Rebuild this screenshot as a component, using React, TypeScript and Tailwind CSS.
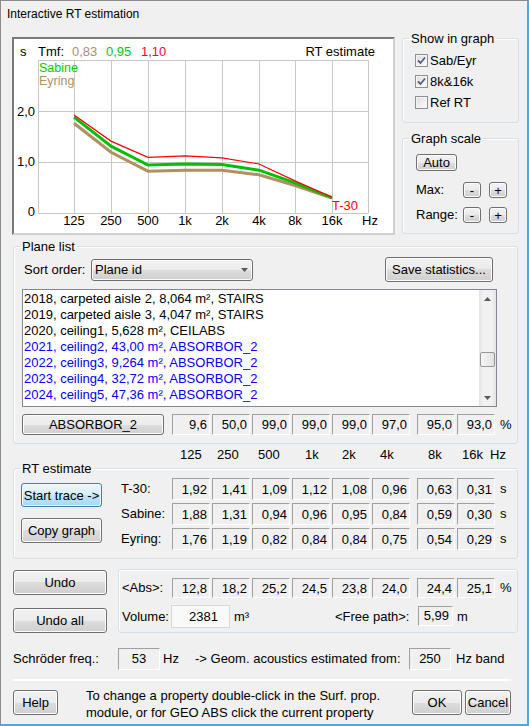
import React from 'react';

const sunken = 'border border-t-[#a0a0a0] border-l-[#a0a0a0] border-r-white border-b-white';
const face =
  'border border-[#707070] rounded-[3px] bg-[linear-gradient(#f2f2f2,#ebebeb_50%,#dddddd_50%,#cfcfcf)] shadow-[inset_0_0_0_1px_#fcfcfc]';
const faceHot =
  'border border-[#3c7fb1] rounded-[3px] bg-[linear-gradient(#eaf6fd,#d9f0fc_50%,#bee6fd_50%,#a7d9f5)] shadow-[inset_0_0_0_1px_#f4fbff]';

type BtnProps = { children: React.ReactNode; className?: string; hot?: boolean };

const Btn = ({ children, className = '', hot = false }: BtnProps) => (
  <button
    type="button"
    className={`${hot ? faceHot : face} flex items-center justify-center leading-none text-black shrink-0 ${className}`}
  >
    {children}
  </button>
);

const Val = ({ v, h }: { v: string; h: string }) => (
  <div className={`w-[38px] ${h} ${sunken} flex items-center justify-end pr-[2px] leading-none`}>{v}</div>
);

const ValRow = ({ vals, h, unit }: { vals: string[]; h: string; unit: string }) => (
  <div className="flex items-center">
    <div className="flex gap-[2px]">
      {vals.slice(0, 6).map((v, i) => (
        <Val key={i} v={v} h={h} />
      ))}
    </div>
    <div className="flex gap-[2px] ml-[7px]">
      {vals.slice(6).map((v, i) => (
        <Val key={i} v={v} h={h} />
      ))}
    </div>
    <span className="ml-[5px]">{unit}</span>
  </div>
);

const Group = ({ title, className = '', children }: { title?: string; className?: string; children: React.ReactNode }) => (
  <fieldset className={`border border-[#d5dfe5] rounded-[3px] shadow-[inset_1px_1px_0_#fff] min-w-0 ${className}`}>
    {title ? <legend className="ml-[6px] px-[2px] leading-[15px]">{title}</legend> : null}
    {children}
  </fieldset>
);

const Check = ({ checked, label }: { checked: boolean; label: string }) => (
  <div className="flex items-center h-[21px]">
    <div className="w-[13px] h-[13px] border border-[#8f8f8f] bg-[linear-gradient(135deg,#dcdcdc,#fdfdfd)] shadow-[inset_0_0_0_1px_#f4f4f4] flex items-center justify-center">
      {checked && (
        <svg width="11" height="11" viewBox="0 0 11 11">
          <polyline points="2,5.5 4.5,8 9,2.5" fill="none" stroke="#4d6185" strokeWidth="1.8" />
        </svg>
      )}
    </div>
    <span className="ml-[2px]">{label}</span>
  </div>
);

const xs = [74, 111, 148, 185, 222, 259, 295, 332];
const yv = (v: number) => 213 - 51 * v;
const pts = (arr: number[]) => arr.map((v, i) => `${xs[i]},${yv(v).toFixed(1)}`).join(' ');

const t30 = ['1,92', '1,41', '1,09', '1,12', '1,08', '0,96', '0,63', '0,31'];
const sab = ['1,88', '1,31', '0,94', '0,96', '0,95', '0,84', '0,59', '0,30'];
const eyr = ['1,76', '1,19', '0,82', '0,84', '0,84', '0,75', '0,54', '0,29'];
const num = (a: string[]) => a.map((s) => parseFloat(s.replace(',', '.')));

const freqs = ['125', '250', '500', '1k', '2k', '4k', '8k', '16k'];

const Graph = () => (
  <div className="ml-[12px] mt-[10px] w-[383px] h-[198px] bg-white border-2 border-t-[#7a7a7a] border-l-[#7a7a7a] border-r-[#d0d0d0] border-b-[#d0d0d0] shrink-0">
    <svg width="379" height="194" viewBox="14 39 379 194" fontFamily="Liberation Sans, Arial, sans-serif" fontSize="13">
      {[38, ...xs, 368].map((x) => (
        <line key={x} x1={x + 0.5} x2={x + 0.5} y1={60} y2={213} stroke="#c8c8c8" />
      ))}
      {[60, 111, 162, 213].map((y) => (
        <line key={y} x1={38} x2={368.5} y1={y + 0.5} y2={y + 0.5} stroke="#c8c8c8" />
      ))}
      <text x="20" y="56">s</text>
      <text x="38" y="56">Tmf:</text>
      <text x="72" y="56" fill="#b08f62">0,83</text>
      <text x="106" y="56" fill="#00cc00">0,95</text>
      <text x="141" y="56" fill="#ff0033">1,10</text>
      <text x="375" y="56" textAnchor="end">RT estimate</text>
      <text x="39" y="72" fontSize="12.5" fill="#00cc00">Sabine</text>
      <text x="39" y="85" fontSize="12.5" fill="#b08f62">Eyring</text>
      <text x="35" y="116" textAnchor="end">2,0</text>
      <text x="35" y="166" textAnchor="end">1,0</text>
      <text x="35" y="216" textAnchor="end">0</text>
      {freqs.map((f, i) => (
        <text key={f} x={xs[i]} y="225" textAnchor="middle">
          {f}
        </text>
      ))}
      <text x="370" y="225" textAnchor="middle">Hz</text>
      <polyline points={pts(num(eyr))} fill="none" stroke="#b08f62" strokeWidth="3" />
      <polyline points={pts(num(sab))} fill="none" stroke="#00c000" strokeWidth="3" />
      <polyline points={pts(num(t30))} fill="none" stroke="#ff0000" strokeWidth="1.2" />
      <text x="332" y="210" fill="#ff0000">T-30</text>
    </svg>
  </div>
);

const items: [string, boolean][] = [
  ['2018, carpeted aisle 2, 8,064 m², STAIRS', false],
  ['2019, carpeted aisle 3, 4,047 m², STAIRS', false],
  ['2020, ceiling1, 5,628 m², CEILABS', false],
  ['2021, ceiling2, 43,00 m², ABSORBOR_2', true],
  ['2022, ceiling3, 9,264 m², ABSORBOR_2', true],
  ['2023, ceiling4, 32,72 m², ABSORBOR_2', true],
  ['2024, ceiling5, 47,36 m², ABSORBOR_2', true],
];

const Arrow = ({ up }: { up?: boolean }) => (
  <svg width="7" height="4" viewBox="0 0 7 4">
    <polygon points={up ? '0,4 7,4 3.5,0' : '0,0 7,0 3.5,4'} fill="#5a5a5a" />
  </svg>
);

export default function App() {
  const hdrW = ['w-[37px]', 'w-[41px]', 'w-[47px]', 'w-[37px]', 'w-[38px]', 'w-[48px]', 'w-[34px]', 'w-[28px]'];
  return (
    <div className="w-[529px] h-[726px] bg-[#f0f0f0] flex flex-col text-[13px] text-black font-['Liberation_Sans',Arial,sans-serif] overflow-hidden shadow-[inset_1px_1px_0_#8c8c8c,inset_-2px_-2px_0_#45ace4]">
      {/* title */}
      <div className="h-[27px] shrink-0 flex items-center pl-[7px] text-[12px]">Interactive RT estimation</div>

      {/* graph + options */}
      <div className="flex h-[210px] shrink-0">
        <Graph />
        <div className="ml-[7px] mt-[4px] w-[117px] flex flex-col">
          <Group title="Show in graph">
            <div className="pt-[4px] pb-[9px] pl-[12px]">
              <Check checked label="Sab/Eyr" />
              <Check checked label="8k&16k" />
              <Check checked={false} label="Ref RT" />
            </div>
          </Group>
          <Group title="Graph scale" className="mt-[8px]">
            <div className="pt-[8px] pb-[10px] pl-[13px]">
              <Btn className="w-[41px] h-[17px]">Auto</Btn>
              <div className="flex items-center h-[16px] mt-[11px]">
                <span className="w-[47px]">Max:</span>
                <Btn className="w-[18px] h-[16px]">-</Btn>
                <Btn className="w-[18px] h-[16px] ml-[8px]">+</Btn>
              </div>
              <div className="flex items-center h-[16px] mt-[9px]">
                <span className="w-[47px]">Range:</span>
                <Btn className="w-[18px] h-[16px]">-</Btn>
                <Btn className="w-[18px] h-[16px] ml-[8px]">+</Btn>
              </div>
            </div>
          </Group>
        </div>
      </div>

      {/* plane list */}
      <Group title="Plane list" className="mt-[2px] ml-[13px] w-[505px] shrink-0">
        <div className="pt-[3px] pb-[8px] pl-[8px]">
          <div className="flex items-center h-[25px]">
            <span className="ml-[2px] w-[67px]">Sort order:</span>
            <div className={`${face} w-[162px] h-[22px] flex items-center pl-[3px] pr-[4px]`}>
              <span className="flex-1">Plane id</span>
              <Arrow />
            </div>
            <Btn className="ml-[132px] w-[108px] h-[25px]">Save statistics...</Btn>
          </div>
          <div className="mt-[7px] w-[475px] h-[118px] border border-[#828790] bg-white flex">
            <div className="flex-1 pt-[1px] pl-[1px]">
              {items.map(([t, blue]) => (
                <div key={t} className={`h-[16px] leading-[16px] whitespace-nowrap ${blue ? 'text-[#0000ff]' : 'text-black'}`}>
                  {t}
                </div>
              ))}
            </div>
            <div className="w-[17px] flex flex-col bg-[linear-gradient(90deg,#e4e4e4,#f1f1f1_25%,#f1f1f1_75%,#e4e4e4)]">
              <div className="h-[17px] flex items-center justify-center">
                <Arrow up />
              </div>
              <div className="flex-1 pt-[45px]">
                <div className="mx-auto w-[15px] h-[15px] rounded-[2px] border border-[#979797] bg-[linear-gradient(90deg,#f6f6f6,#e2e2e2)]" />
              </div>
              <div className="h-[17px] flex items-center justify-center">
                <Arrow />
              </div>
            </div>
          </div>
          <div className="mt-[7px] flex items-center h-[21px]">
            <Btn className="w-[142px] h-[21px]">ABSORBOR_2</Btn>
            <div className="ml-[8px]">
              <ValRow vals={['9,6', '50,0', '99,0', '99,0', '99,0', '97,0', '95,0', '93,0']} h="h-[21px]" unit="%" />
            </div>
          </div>
        </div>
      </Group>

      {/* frequency header */}
      <div className="ml-[180px] h-[17px] leading-[21px] flex shrink-0">
        {freqs.map((f, i) => (
          <span key={f} className={hdrW[i]}>
            {f}
          </span>
        ))}
        <span>Hz</span>
      </div>

      {/* RT estimate */}
      <Group title="RT estimate" className="ml-[13px] w-[505px] shrink-0">
        <div className="flex pt-[2px] pb-[8px]">
          <div className="ml-[7px] w-[81px] pt-[5px] flex flex-col">
            <Btn hot className="w-[81px] h-[24px]">Start trace -&gt;</Btn>
            <Btn className="w-[81px] h-[25px] mt-[11px]">Copy graph</Btn>
          </div>
          <div className="ml-[19px] flex flex-col gap-[3px]">
            {[
              ['T-30:', t30],
              ['Sabine:', sab],
              ['Eyring:', eyr],
            ].map(([l, v]) => (
              <div key={l as string} className="flex items-center h-[22px]">
                <span className="w-[51px]">{l as string}</span>
                <ValRow vals={v as string[]} h="h-[22px]" unit="s" />
              </div>
            ))}
          </div>
        </div>
      </Group>

      {/* undo + averages */}
      <div className="flex mt-[10px] h-[64px] ml-[13px] shrink-0">
        <div className="w-[94px] flex flex-col">
          <Btn className="w-[94px] h-[25px] mt-[1px]">Undo</Btn>
          <Btn className="w-[94px] h-[25px] mt-[13px]">Undo all</Btn>
        </div>
        <div className="ml-[11px] w-[400px] h-[64px] border border-[#d5dfe5] rounded-[3px] shadow-[inset_1px_1px_0_#fff] pt-[8px] pl-[3px]">
          <div className="flex items-center h-[20px]">
            <span className="w-[50px]">&lt;Abs&gt;:</span>
            <ValRow vals={['12,8', '18,2', '25,2', '24,5', '23,8', '24,0', '24,4', '25,1']} h="h-[20px]" unit="%" />
          </div>
          <div className="flex items-start h-[23px] mt-[7px]">
            <span className="w-[49px] leading-[23px]">Volume:</span>
            <div className="w-[59px] h-[23px] border border-[#d9d9d9] bg-[#f9f9f9] flex items-center justify-end pr-[11px]">2381</div>
            <span className="ml-[4px] w-[101px] leading-[23px]">m³</span>
            <span className="w-[83px] leading-[23px]">&lt;Free path&gt;:</span>
            <div className={`w-[35px] h-[20px] mt-[1px] ${sunken} flex items-center justify-end pr-[3px]`}>5,99</div>
            <span className="ml-[4px] leading-[23px]">m</span>
          </div>
        </div>
      </div>

      {/* schroeder */}
      <div className="flex items-center h-[22px] mt-[15px] ml-[13px] shrink-0">
        <span className="w-[105px]">Schröder freq.:</span>
        <div className={`w-[42px] h-[22px] ${sunken} flex items-center justify-center`}>53</div>
        <span className="ml-[3px] w-[32px]">Hz</span>
        <span className="w-[214px]">-&gt; Geom. acoustics estimated from:</span>
        <div className={`w-[42px] h-[22px] ${sunken} flex items-center justify-center`}>250</div>
        <span className="ml-[5px]">Hz band</span>
      </div>

      <div className="mt-[9px] ml-[13px] w-[498px] h-[2px] bg-white shrink-0" />

      {/* footer */}
      <div className="flex mt-[9px] ml-[13px] h-[25px] shrink-0">
        <Btn className="w-[45px] h-[25px]">Help</Btn>
        <div className="ml-[28px] w-[326px] leading-[17px] -mt-[3px]">
          To change a property double-click in the Surf. prop.
          <br />
          module, or for GEO ABS click the current property
        </div>
        <Btn className="w-[50px] h-[25px]">OK</Btn>
        <Btn className="w-[46px] h-[25px] ml-[3px]">Cancel</Btn>
      </div>
    </div>
  );
}
